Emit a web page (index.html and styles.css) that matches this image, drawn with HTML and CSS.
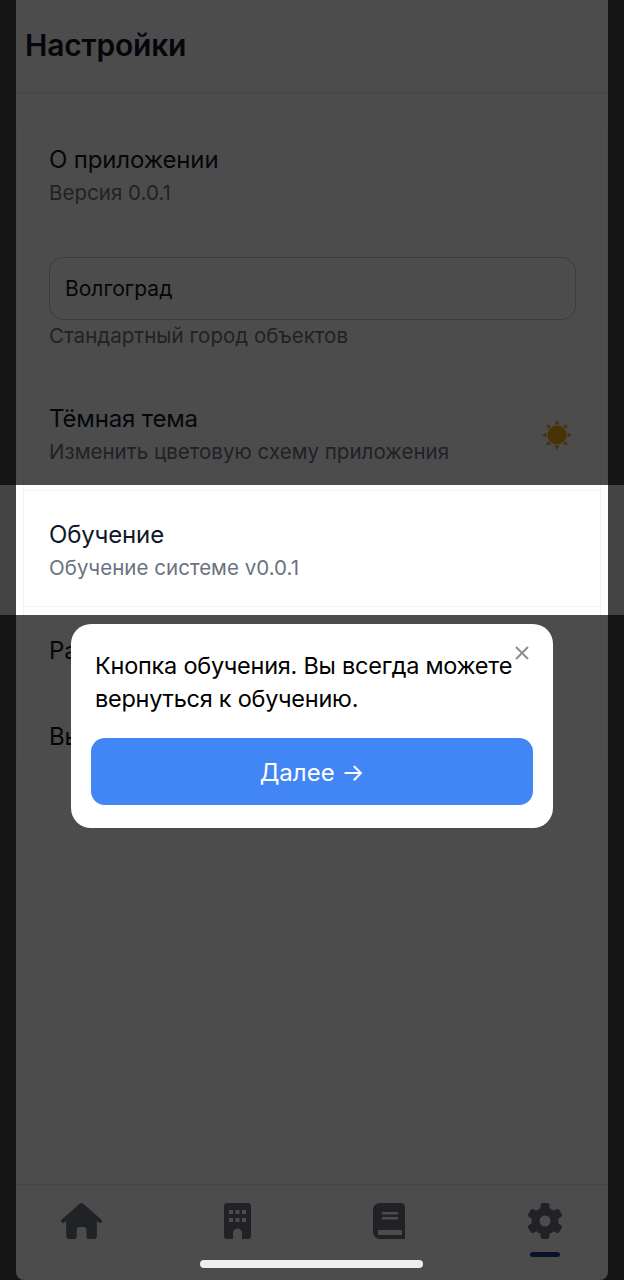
FILE: index.html
```html
<!DOCTYPE html>
<html lang="ru">
<head>
<meta charset="UTF-8">
<meta name="viewport" content="width=device-width, initial-scale=1.0">
<title>Настройки</title>
<link rel="stylesheet" href="styles.css">
</head>
<body>
    <div class="app">
        <div class="header">
            <h1>Настройки</h1>
        </div>

        <div class="content">
            <div class="card">
                <div class="row">
                    <div class="row-title">О приложении</div>
                    <div class="row-sub">Версия 0.0.1</div>
                </div>
                <div class="row row-city">
                    <div class="city-input">Волгоград</div>
                    <div class="row-sub">Стандартный город объектов</div>
                </div>
                <div class="row row-theme">
                    <div>
                        <div class="row-title">Тёмная тема</div>
                        <div class="row-sub">Изменить цветовую схему приложения</div>
                    </div>
                    <svg class="sun" viewBox="-15 -15 30 30">
                        <g class="sun-rays">
                            <path d="M-2.500-10.500L0-15l2.500 4.500z"/>
                            <path d="M-2.500-10.500L0-15l2.500 4.500z" transform="rotate(45)"/>
                            <path d="M-2.500-10.500L0-15l2.500 4.500z" transform="rotate(90)"/>
                            <path d="M-2.500-10.500L0-15l2.500 4.500z" transform="rotate(135)"/>
                            <path d="M-2.500-10.500L0-15l2.500 4.500z" transform="rotate(180)"/>
                            <path d="M-2.500-10.500L0-15l2.500 4.500z" transform="rotate(225)"/>
                            <path d="M-2.500-10.500L0-15l2.500 4.500z" transform="rotate(270)"/>
                            <path d="M-2.500-10.500L0-15l2.500 4.500z" transform="rotate(315)"/>
                        </g>
                        <circle class="sun-disc" r="9.500"/>
                    </svg>
                </div>
                <div class="row">
                    <div class="row-title">Обучение</div>
                    <div class="row-sub">Обучение системе v0.0.1</div>
                </div>
                <div class="row row-short">
                    <div class="row-title">Ра</div>
                </div>
                <div class="row row-short">
                    <div class="row-title">Вы</div>
                </div>
            </div>
        </div>

        <div class="tabbar">
            <div class="tab">
                <svg class="icon-home" viewBox="0 0 41 36">
                    <path fill-rule="evenodd" d="M20.500 0c.7 0 1.300.3 1.800.7L40.200 16.500c.9.800 1 2 .3 2.800-.7.800-1.900.9-2.700.2l-1.900-1.600V33c0 1.700-1.300 3-3 3h-5.400c-1.100 0-2-.9-2-2v-7c0-1.700-1.400-3-3-3h-3.800c-1.600 0-3 1.300-3 3v7c0 1.100-.9 2-2 2H8.200c-1.700 0-3-1.300-3-3V18l-2 1.600c-.8.700-2 .6-2.700-.2-.7-.8-.6-2 .3-2.800L18.700.7c.5-.4 1.100-.7 1.800-.7z"/>
                </svg>
            </div>
            <div class="tab">
                <svg class="icon-building" viewBox="0 0 27 36">
                    <path fill-rule="evenodd" d="M3 0h21c1.700 0 3 1.300 3 3v30c0 1.700-1.300 3-3 3h-6v-6c0-2.500-2-4.500-4.500-4.500S9 27.500 9 30v6H3c-1.700 0-3-1.300-3-3V3c0-1.700 1.300-3 3-3zM5 7v4h4V7zm6.500 0v4h4V7zM18 7v4h4V7zM5 15v4h4v-4zm6.500 0v4h4v-4zm6.500 0v4h4v-4z"/>
                </svg>
            </div>
            <div class="tab">
                <svg class="icon-book" viewBox="0 0 32 36">
                    <path d="M7 0h21c2.200 0 4 1.800 4 4v32H7c-3.900 0-7-3.100-7-7V7c0-3.900 3.100-7 7-7z"/>
                    <rect class="book-cut" x="9" y="9" width="16" height="2.500"/>
                    <rect class="book-cut" x="9" y="14" width="16" height="2.500"/>
                    <rect class="book-cut" x="5" y="27" width="24" height="5" rx="1"/>
                </svg>
            </div>
            <div class="tab tab-active">
                <svg class="icon-gear" viewBox="0 0 36 36">
                    <g>
                        <rect x="13.500" y="0" width="9" height="36" rx="2.500"/>
                        <rect x="13.500" y="0" width="9" height="36" rx="2.500" transform="rotate(60 18 18)"/>
                        <rect x="13.500" y="0" width="9" height="36" rx="2.500" transform="rotate(120 18 18)"/>
                    </g>
                    <circle class="gear-ring" cx="18" cy="18" r="9.500"/>
                </svg>
                <div class="tab-line"></div>
            </div>
        </div>
    </div>

    <div class="spotlight"></div>

    <div class="tour">
        <button class="tour-close" aria-label="Закрыть">
            <svg viewBox="0 0 14 14"><path d="M1 1l12 12M13 1L1 13"/></svg>
        </button>
        <p>Кнопка обучения. Вы всегда можете вернуться к обучению.</p>
        <button class="tour-next">Далее →</button>
    </div>

    <div class="home-bar"></div>
</body>
</html>
```

FILE: styles.css
```css
* {
    box-sizing: border-box;
}
html, body {
    height: 100%;
}
body {
    position: relative;
    width: 624px;
    height: 1280px;
    margin: 0;
    overflow: hidden;
    background: #444444;
    font-family: Inter, "Noto Sans", sans-serif;
    color: #0f172a;
}
.app {
    display: flex;
    flex-direction: column;
    height: 1280px;
    margin: 0 16px;
    background: #fff;
    border-radius: 0 0 8px 8px;
}
.header {
    height: 93px;
    padding: 28px 9px 0;
    border-bottom: 1px solid #e5e7eb;
}
.header h1 {
    margin: 0;
    font-size: 30px;
    line-height: 34px;
    font-weight: 600;
    letter-spacing: -0.2px;
}
.content {
    flex: 1;
    padding: 22px 7px 0;
}
.card {
    border: 1px solid #f3f4f6;
    border-radius: 14px;
}
.row {
    height: 116px;
    padding: 28px 24px 0 25px;
    border-bottom: 1px solid #f3f4f6;
}
.row:last-child {
    border-bottom: none;
}
.row-title {
    font-size: 24px;
    line-height: 32px;
    letter-spacing: -0.15px;
}
.row-sub {
    margin-top: 1px;
    font-size: 20.500px;
    line-height: 32px;
    letter-spacing: 0.03px;
    color: #6b7280;
}
.row-city {
    height: 143px;
    padding-top: 25px;
}
.city-input {
    height: 63px;
    padding: 0 15px;
    border: 1px solid #c4c9d2;
    border-radius: 14px;
    font-size: 21px;
    line-height: 61px;
}
.row-city .row-sub {
    margin-top: 0;
}
.row-theme {
    display: flex;
    justify-content: space-between;
    align-items: center;
    padding-top: 5px;
    padding-right: 28px;
}
.sun {
    width: 30px;
    height: 30px;
}
.sun-rays {
    fill: #f2a33a;
}
.sun-disc {
    fill: #f5a80f;
}
.row-short {
    height: 86px;
}
.tabbar {
    display: flex;
    justify-content: space-between;
    height: 96px;
    padding: 18px 3px 0 5px;
    border-top: 1px solid #e5e7eb;
}
.tab {
    display: flex;
    flex-direction: column;
    align-items: center;
    width: 120px;
    fill: #6b7280;
}
.tab svg {
    display: block;
    height: 36px;
}
.icon-home {
    width: 41px;
}
.icon-building {
    width: 27px;
    margin-left: 4px;
}
.icon-book {
    width: 32px;
    margin-right: 2px;
}
.icon-gear {
    width: 36px;
}
.book-cut {
    fill: #fff;
}
.gear-ring {
    fill: #fff;
    stroke: #6b7280;
    stroke-width: 8;
}
.tab-line {
    width: 30px;
    height: 5px;
    margin-top: 13px;
    border-radius: 3px;
    background: #1e3a8a;
}
/* dark layer comes from the shadow, the hole stays clear */
.spotlight {
    position: absolute;
    top: 485px;
    left: 0;
    width: 624px;
    height: 130px;
    box-shadow: 0 0 0 1400px rgba(0, 0, 0, 0.7);
}
.tour {
    position: absolute;
    top: 624px;
    left: 71px;
    width: 482px;
    height: 204px;
    padding: 25px 20px 0;
    background: #fff;
    border-radius: 20px;
}
.tour p {
    margin: 0 4px 23px;
    font-size: 23.500px;
    line-height: 33px;
    letter-spacing: -0.25px;
    color: #000;
}
.tour-close {
    position: absolute;
    top: 21px;
    right: 23px;
    width: 16px;
    height: 16px;
    padding: 0;
    border: none;
    background: none;
}
.tour-close svg {
    display: block;
    width: 14px;
    height: 14px;
    margin: 1px;
    fill: none;
    stroke: #8e8e93;
    stroke-width: 2;
}
.tour-next {
    display: block;
    width: 100%;
    height: 67px;
    padding: 2px 0 0;
    border: none;
    border-radius: 14px;
    background: #4285f4;
    color: #fff;
    font-family: inherit;
    font-size: 24px;
}
.home-bar {
    position: absolute;
    left: 200px;
    bottom: 12px;
    width: 223px;
    height: 8px;
    border-radius: 4px;
    background: #eeeeee;
}
```
